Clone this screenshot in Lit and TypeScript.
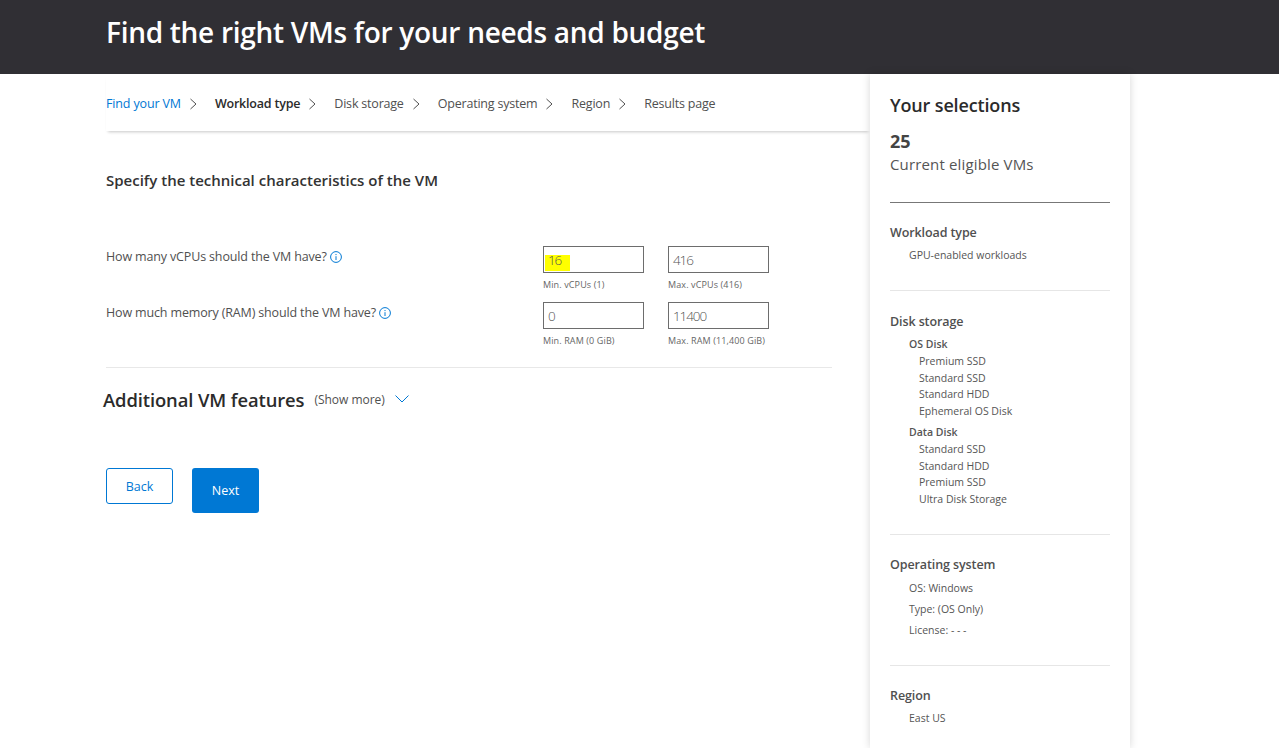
import { LitElement, html, css } from "lit";
import { customElement } from "lit/decorators.js";

const chev = html`<svg class="chev" width="9" height="12" viewBox="0 0 9 12"><path d="M1.5 1 L7 6 L1.5 11" fill="none" stroke="currentColor" stroke-width="1"/></svg>`;
const info = html`<svg class="info" width="12" height="12" viewBox="0 0 12 12"><circle cx="6" cy="6" r="5.4" fill="none" stroke="#0078d4" stroke-width="1"/><path d="M6 5.2V9M6 3v1.1" stroke="#0078d4" stroke-width="1" fill="none"/></svg>`;

@customElement("app-root")
export class AppRoot extends LitElement {
  static styles = css`
    :host { display: block; height: 748px; overflow: hidden; background: #fff; font-family: "Open Sans", "Noto Sans", sans-serif; color: #505050; }
    * { box-sizing: border-box; }
    header { height: 74px; background: #302f34; padding-left: 106px; display: flex; align-items: center; }
    h1 { margin: 0 0 11px; font-size: 28px; font-weight: 600; color: #fff; letter-spacing: -0.28px; white-space: nowrap; }
    .wrap { display: grid; grid-template-columns: 764px 260px; margin-left: 106px; align-items: start; }
    .crumbs { height: 57px; padding-top: 2px; display: flex; align-items: center; font-size: 12.5px; letter-spacing: -0.2px; box-shadow: 0 3px 3px -2px rgba(0,0,0,.22); color: #505050; white-space: nowrap; }
    .crumb { display: flex; align-items: center; }
    .crumb .chev { margin: 1px 17px 0 8px; color: #505050; }
    .crumb.link { color: #0078d4; letter-spacing: -0.15px; }
    .crumb.cur { color: #2b2b2b; font-weight: 600; }
    .form { padding-top: 39px; }
    h2 { margin: 0; height: 20px; font-size: 15px; line-height: 20px; font-weight: 600; color: #333; }
    .grid { margin-top: 56px; width: 726px; display: grid; grid-template-columns: 437px 125px 100px; row-gap: 11px; }
    .q { margin-top: 1px; font-size: 12.5px; letter-spacing: -0.15px; line-height: 20px; display: flex; align-items: center; gap: 3px; height: 20px; color: #505050; white-space: nowrap; }
    .field { display: flex; flex-direction: column; }
    .box { width: 101px; height: 27px; border: 1px solid #6d6d6d; font-size: 13.5px; font-weight: 300; letter-spacing: -1.1px; padding: 0 0 1px 1px; display: flex; align-items: flex-end; color: #555; }
    .val { padding: 0 3px; line-height: 10px; height: 16px; }
    .val.hl { background: #ffff00; width: 25px; }
    .hint { font-size: 9px; letter-spacing: 0.12px; line-height: 12px; margin-top: 6px; color: #666; white-space: nowrap; }
    .rule { width: 726px; height: 1px; background: #e8e8e8; margin-top: 20px; }
    .more { display: flex; align-items: center; margin: 18px 0 0 -3px; height: 26px; }
    .more h3 { margin: 0; font-size: 18.4px; font-weight: 600; color: #2b2b2b; letter-spacing: -0.1px; white-space: nowrap; }
    .more span { font-size: 12px; letter-spacing: -0.02px; margin-left: 10px; color: #505050; }
    .more svg { margin-left: 10px; }
    .btns { display: flex; gap: 19px; margin-top: 56px; align-items: flex-start; }
    .btn { width: 67px; border-radius: 3px; font-size: 12.5px; display: flex; align-items: center; justify-content: center; }
    .back { height: 36px; border: 1px solid #0078d4; color: #0078d4; }
    .next { height: 45px; background: #0078d4; color: #fff; font-weight: 500; }
    aside { height: 674px; padding: 19px 20px 0; box-shadow: 0 0 8px rgba(0,0,0,.16); background: #fff; position: relative; }
    .sh { margin: 0; font-size: 18px; line-height: 24px; font-weight: 600; color: #2b2b2b; letter-spacing: -0.15px; }
    .count { font-size: 18px; line-height: 24px; font-weight: 700; color: #444; margin-top: 12px; }
    .sub { font-size: 15px; line-height: 22px; color: #555; letter-spacing: 0.15px; white-space: nowrap; }
    hr { border: 0; height: 1px; margin: 0; background: #e6e6e6; }
    hr.dark { background: #777; margin-top: 27px; }
    hr.m26 { margin-top: 26px; }
    hr.m24 { margin-top: 24px; }
    .sec { font-size: 12.5px; line-height: 18px; font-weight: 600; color: #505050; letter-spacing: -0.1px; }
    .m21 { margin-top: 21px; }
    .m22 { margin-top: 22px; }
    .l1 { font-size: 10.5px; line-height: 16.6px; padding-left: 19px; color: #555; white-space: nowrap; }
    .l1.b { font-weight: 600; }
    .m4 { margin-top: 4px; }
    .m5 { margin-top: 5px; }
    .list { margin-top: 1px; }
    .l2 { font-size: 10.5px; line-height: 16.6px; padding-left: 29px; color: #555; white-space: nowrap; }
    .l3 { font-size: 10.5px; line-height: 21px; padding-left: 19px; color: #555; white-space: nowrap; }
  `;

  render() {
    const cr = ["Disk storage", "Operating system", "Region"];
    return html`
      <header><h1>Find the right VMs for your needs and budget</h1></header>
      <div class="wrap">
        <main>
          <nav class="crumbs">
            <div class="crumb link">Find your VM ${chev}</div>
            <div class="crumb cur">Workload type ${chev}</div>
            ${cr.map((c) => html`<div class="crumb">${c} ${chev}</div>`)}
            <div class="crumb">Results page</div>
          </nav>
          <section class="form">
            <h2>Specify the technical characteristics of the VM</h2>
            <div class="grid">
              <div class="q">How many vCPUs should the VM have? ${info}</div>
              <div class="field"><div class="box"><span class="val hl">16</span></div><div class="hint">Min. vCPUs (1)</div></div>
              <div class="field"><div class="box"><span class="val">416</span></div><div class="hint">Max. vCPUs (416)</div></div>
              <div class="q">How much memory (RAM) should the VM have? ${info}</div>
              <div class="field"><div class="box"><span class="val">0</span></div><div class="hint">Min. RAM (0 GiB)</div></div>
              <div class="field"><div class="box"><span class="val">11400</span></div><div class="hint">Max. RAM (11,400 GiB)</div></div>
            </div>
            <div class="rule"></div>
            <div class="more">
              <h3>Additional VM features</h3>
              <span>(Show more)</span>
              <svg width="14" height="8" viewBox="0 0 14 8"><path d="M.5.5 7 7 13.5.5" fill="none" stroke="#0078d4" stroke-width="1"/></svg>
            </div>
            <div class="btns">
              <div class="btn back">Back</div>
              <div class="btn next">Next</div>
            </div>
          </section>
        </main>
        <aside>
          <h4 class="sh">Your selections</h4>
          <div class="count">25</div>
          <div class="sub">Current eligible VMs</div>
          <hr class="dark" />
          <div class="sec m21">Workload type</div>
          <div class="l1 m5">GPU-enabled workloads</div>
          <hr class="m26" />
          <div class="sec m22">Disk storage</div>
          <div class="l1 b m5">OS Disk</div>
          <div class="list">${["Premium SSD", "Standard SSD", "Standard HDD", "Ephemeral OS Disk"].map((x) => html`<div class="l2">${x}</div>`)}</div>
          <div class="l1 b m4">Data Disk</div>
          <div class="list">${["Standard SSD", "Standard HDD", "Premium SSD", "Ultra Disk Storage"].map((x) => html`<div class="l2">${x}</div>`)}</div>
          <hr class="m26" />
          <div class="sec m21">Operating system</div>
          <div class="l3 m4">OS: Windows</div>
          <div class="l3">Type: (OS Only)</div>
          <div class="l3">License: - - -</div>
          <hr class="m24" />
          <div class="sec m21">Region</div>
          <div class="l1 m5">East US</div>
        </aside>
      </div>
    `;
  }
}
